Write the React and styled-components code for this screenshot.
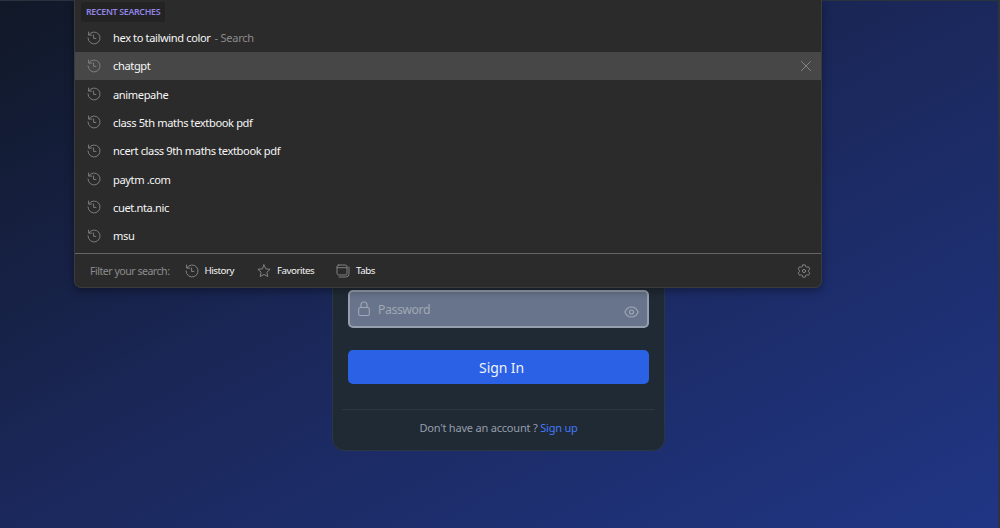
import React from "react";
import styled, { createGlobalStyle } from "styled-components";

const GlobalStyle = createGlobalStyle`
  * {
    box-sizing: border-box;
  }

  body {
    margin: 0;
    overflow: hidden;
    font-family: "Noto Sans", "Open Sans", sans-serif;
  }

  svg {
    display: block;
    flex: none;
    fill: none;
    stroke: currentColor;
    stroke-linecap: round;
    stroke-linejoin: round;
  }
`;

const Page = styled.main`
  position: relative;
  display: flex;
  flex-direction: column;
  align-items: center;
  width: 1000px;
  height: 528px;
  padding-right: 3px;
  border-top: 1px solid #29323d;
  border-right: 2px solid #30333d;
  background: linear-gradient(to bottom right, #111827, #1b285c 50%, #203685);
`;

const Card = styled.form`
  display: flex;
  flex-direction: column;
  justify-content: flex-end;
  width: 333px;
  height: 450px;
  margin-left: 2px;
  padding: 0 9px 14px;
  border: 1px solid #2b3744;
  border-radius: 12px;
  background: #202a35;
`;

const Field = styled.label`
  display: flex;
  align-items: center;
  height: 38px;
  margin: 0 6px 22px;
  padding: 0 8px;
  border: 2px solid #959fae;
  border-radius: 5px;
  background: #67748b;
  color: #a0a8b5;
`;

const Placeholder = styled.span`
  flex: 1;
  margin-left: 8px;
  padding-top: 1px;
  font-size: 12.3px;
  letter-spacing: -0.45px;
  line-height: 18px;
`;

const EyeSlot = styled.span`
  margin-top: 5px;
`;

const SubmitButton = styled.button`
  height: 34px;
  margin: 0 6px 25px;
  padding: 0 0 0 6px;
  border: 0;
  border-radius: 5px;
  background: #2a61e5;
  color: #eef2fc;
  font-family: inherit;
  font-size: 14px;
  letter-spacing: -0.1px;
`;

const SignUpRow = styled.p`
  margin: 0;
  padding-top: 10px;
  border-top: 1px solid #2d3641;
  color: #959da9;
  font-size: 11px;
  letter-spacing: -0.2px;
  line-height: 16px;
  text-align: center;
`;

const SignUpLink = styled.a`
  color: #4379f8;
`;

const Dropdown = styled.section`
  position: absolute;
  top: -1px;
  left: 74px;
  width: 748px;
  height: 288px;
  border: 1px solid #3a3b3e;
  border-top: 0;
  border-radius: 0 0 7px 7px;
  background: #2b2b2b;
  box-shadow: 0 3px 8px rgba(0, 0, 0, 0.35);
  overflow: hidden;
`;

const Heading = styled.h2`
  width: fit-content;
  height: 20px;
  margin: 2px 0 1.4px 6px;
  padding: 0 5px;
  border-radius: 3px;
  background: #232323;
  color: #9184e3;
  font-size: 8.8px;
  font-weight: 600;
  letter-spacing: -0.3px;
  line-height: 20px;
`;

const SearchRow = styled.li`
  display: flex;
  align-items: center;
  height: 28.3px;
  padding: 0 9px 0 12px;
  background: ${(props) => (props.$active ? "#474747" : "transparent")};
  color: #858585;
`;

const List = styled.ul`
  margin: 0;
  padding: 0;
  list-style: none;
`;

const Query = styled.span`
  margin-left: 12px;
  color: #f6f6f6;
  font-size: 11.1px;
  letter-spacing: -0.38px;
  white-space: pre;
`;

const Hint = styled.span`
  flex: 1;
  margin-left: 4px;
  color: #8b8b8b;
  font-size: 11px;
  letter-spacing: -0.25px;
`;

const Footer = styled.footer`
  display: flex;
  align-items: center;
  height: 34px;
  margin-top: 3.3px;
  padding: 0 10px 0 15px;
  border-top: 1px solid #666;
  color: #8b8b8b;
`;

const FilterLabel = styled.span`
  width: 94.5px;
  font-size: 10.6px;
  letter-spacing: -0.5px;
  white-space: nowrap;
`;

const Filter = styled.span`
  display: flex;
  align-items: center;
  gap: 6px;
  width: ${(props) => props.$width}px;
  color: #8b8b8b;
`;

const FilterName = styled.span`
  color: #f4f4f4;
  font-size: 9.8px;
  letter-spacing: -0.5px;
`;

const SettingsSlot = styled.span`
  margin-left: auto;
`;

const HistoryIcon = () => (
  <svg width="14" height="14" viewBox="0 0 14 14" strokeWidth="0.9">
    <path d="M1.6 1v3.1h3.2M1.9 3.8A6 6 0 1 1 1 7" />
    <path d="M6.6 4v3.4h2.3" />
  </svg>
);

const StarIcon = () => (
  <svg width="14" height="14" viewBox="0 0 14 14" strokeWidth="0.9">
    <path d="m7 .9 1.8 3.9 4.3.5-3.2 2.9.9 4.3L7 10.4l-3.8 2.1.9-4.3L.9 5.3l4.3-.5z" />
  </svg>
);

const TabsIcon = () => (
  <svg width="14" height="14" viewBox="0 0 14 14" strokeWidth="0.9">
    <rect x="1" y="1" width="10" height="10" rx="1.8" />
    <path d="M1 3.7h10M3 13h6.8a3.2 3.2 0 0 0 3.2-3.2V3" />
  </svg>
);

const GearIcon = () => (
  <svg width="14" height="14" viewBox="0 0 14 14" strokeWidth="0.9">
    <path d="M5.7.9h2.6l.4 1.7 1.1.6 1.7-.5 1.3 2.2-1.2 1.3v1.6l1.2 1.3-1.3 2.2-1.7-.5-1.1.6-.4 1.7H5.7l-.4-1.7-1.1-.6-1.7.5-1.3-2.2 1.2-1.3V6.2L1.2 4.9l1.3-2.2 1.7.5 1.1-.6z" />
    <circle cx="7" cy="7" r="1.6" />
  </svg>
);

const CloseIcon = () => (
  <svg width="12" height="12" viewBox="0 0 12 12" strokeWidth="1">
    <path d="m1.5 1.5 9 9m0-9-9 9" />
  </svg>
);

const LockIcon = () => (
  <svg width="12" height="16" viewBox="0 0 12 16" strokeWidth="1.1">
    <rect x=".7" y="6.5" width="10.6" height="8" rx="1.5" />
    <path d="M3 6.5V4a3 3 0 0 1 6 0v2.5" />
  </svg>
);

const EyeIcon = () => (
  <svg width="15" height="12" viewBox="0 0 15 12" strokeWidth="1.1">
    <path d="M.8 6C2.2 2.8 4.5 1 7.5 1s5.3 1.8 6.7 5c-1.4 3.2-3.7 5-6.7 5S2.2 9.2.8 6z" />
    <circle cx="7.5" cy="6" r="2" />
  </svg>
);

const searches = [
  { query: "hex to tailwind color", hint: "- Search" },
  { query: "chatgpt", active: true },
  { query: "animepahe" },
  { query: "class 5th maths textbook pdf" },
  { query: "ncert class 9th maths textbook pdf" },
  { query: "paytm .com" },
  { query: "cuet.nta.nic" },
  { query: "msu" },
];

const filters = [
  { name: "History", Icon: HistoryIcon, width: 72.5 },
  { name: "Favorites", Icon: StarIcon, width: 79 },
  { name: "Tabs", Icon: TabsIcon, width: 60 },
];

const SearchDropdown = () => (
  <Dropdown>
    <Heading>RECENT SEARCHES</Heading>
    <List>
      {searches.map(({ query, hint, active }) => (
        <SearchRow key={query} $active={active}>
          <HistoryIcon />
          <Query>{query}</Query>
          <Hint>{hint}</Hint>
          {active && <CloseIcon />}
        </SearchRow>
      ))}
    </List>
    <Footer>
      <FilterLabel>Filter your search:</FilterLabel>
      {filters.map(({ name, Icon, width }) => (
        <Filter key={name} $width={width}>
          <Icon />
          <FilterName>{name}</FilterName>
        </Filter>
      ))}
      <SettingsSlot>
        <GearIcon />
      </SettingsSlot>
    </Footer>
  </Dropdown>
);

const App = () => (
  <>
    <GlobalStyle />
    <Page>
      <Card>
        <Field>
          <LockIcon />
          <Placeholder>Password</Placeholder>
          <EyeSlot>
            <EyeIcon />
          </EyeSlot>
        </Field>
        <SubmitButton type="button">Sign In</SubmitButton>
        <SignUpRow>
          Don't have an account ? <SignUpLink>Sign up</SignUpLink>
        </SignUpRow>
      </Card>
      <SearchDropdown />
    </Page>
  </>
);

export default App;
